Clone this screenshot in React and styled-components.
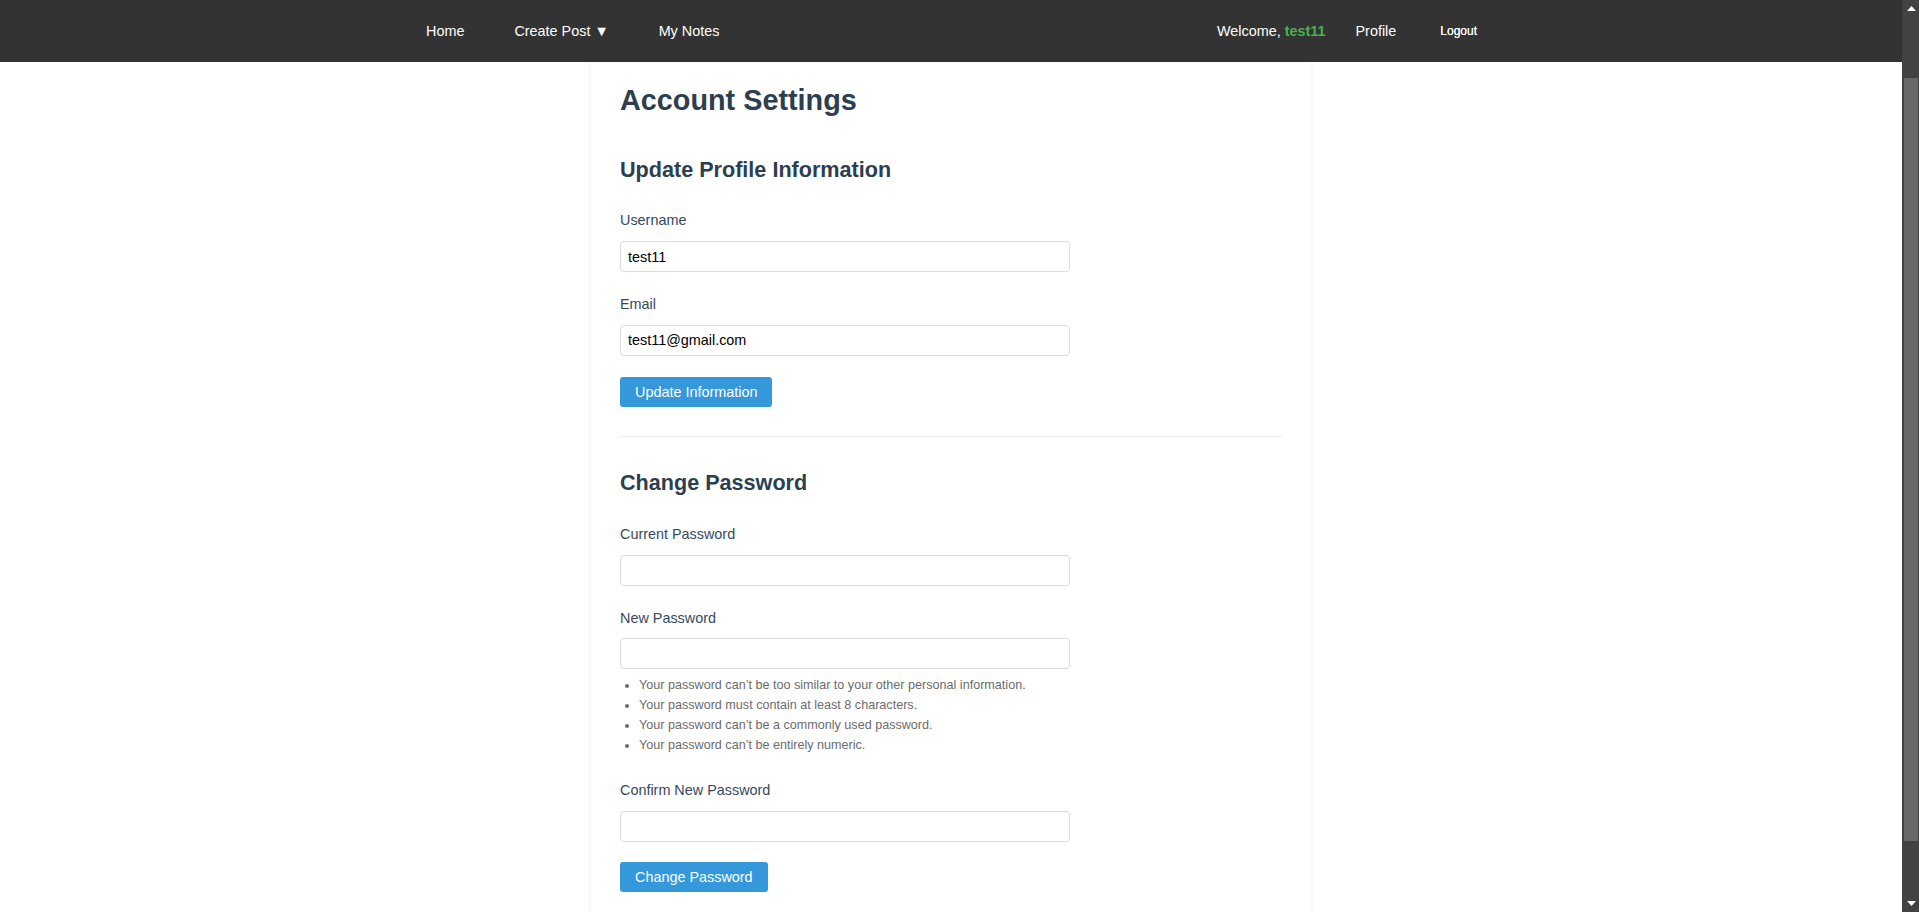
import React from 'react'
import styled, { createGlobalStyle } from 'styled-components';

const GlobalStyle = createGlobalStyle`
  html {
    scrollbar-width: none;
  }
  body {
    margin: 0 17px 0 0;
    background: #fff;
    font-family: "Liberation Sans", Arial, sans-serif;
    font-size: 14.4px;
  }
`;

function App() {
  return (
    <>
      <GlobalStyle />
      <Nav>
        <NavInner>
          <NavGroup $gap={20}>
            <NavLink href="#">Home</NavLink>
            <NavLink href="#">Create Post ▼</NavLink>
            <NavLink href="#">My Notes</NavLink>
          </NavGroup>
          <NavGroup $gap={15}>
            <Welcome>Welcome, <UserName>test11</UserName></Welcome>
            <NavLink href="#">Profile</NavLink>
            <LogoutButton>Logout</LogoutButton>
          </NavGroup>
        </NavInner>
      </Nav>
      <Main>
        <Title>Account Settings</Title>

        <SectionTitle>Update Profile Information</SectionTitle>
        <Form>
          <Field>
            <Label>Username</Label>
            <Input type="text" defaultValue="test11" />
          </Field>
          <Field>
            <Label>Email</Label>
            <Input type="email" defaultValue="test11@gmail.com" />
          </Field>
          <SubmitButton type="button">Update Information</SubmitButton>
        </Form>

        <Divider />

        <SectionTitle $second>Change Password</SectionTitle>
        <Form>
          <Field>
            <Label>Current Password</Label>
            <Input type="password" />
          </Field>
          <Field>
            <Label>New Password</Label>
            <Input type="password" />
            <HelpList>
              <li>Your password can’t be too similar to your other personal information.</li>
              <li>Your password must contain at least 8 characters.</li>
              <li>Your password can’t be a commonly used password.</li>
              <li>Your password can’t be entirely numeric.</li>
            </HelpList>
          </Field>
          <Field>
            <Label>Confirm New Password</Label>
            <Input type="password" />
          </Field>
          <SubmitButton type="button" $last>Change Password</SubmitButton>
        </Form>
      </Main>

      <ScrollRail>
        <ArrowButton>
          <svg width="9" height="5" viewBox="0 0 9 5"><path d="M0 5 L4.5 0 L9 5 Z" fill="#fff" /></svg>
        </ArrowButton>
        <Track>
          <Thumb />
        </Track>
        <ArrowButton>
          <svg width="9" height="5" viewBox="0 0 9 5"><path d="M0 0 L4.5 5 L9 0 Z" fill="#fff" /></svg>
        </ArrowButton>
      </ScrollRail>
    </>
  );
}
export default App;

const Nav = styled.nav`
  height: 62px;
  background-color: #333;
  display: flex;
  align-items: center;
  padding-bottom: 1px;
  box-sizing: border-box;
`;
const NavInner = styled.div`
  width: 1080px;
  margin: 0 auto;
  display: flex;
  justify-content: space-between;
  align-items: center;
`;
const NavGroup = styled.div`
  display: flex;
  align-items: center;
  gap: ${p => p.$gap}px;
`;
const NavLink = styled.a`
  padding: 0 15px;
  color: #fff;
  text-decoration: none;
  font-size: 14.4px;
`;
const Welcome = styled.span`
  color: #fff;
  font-size: 14.4px;
`;
const UserName = styled.strong`
  color: #4caf50;
`;
const LogoutButton = styled.button`
  background: none;
  border: none;
  padding: 0 14px;
  color: #fff;
  font-family: "Liberation Sans", Arial, sans-serif;
  font-size: 12px;
  font-weight: normal;
  text-shadow: 0 0 0.4px #fff;
  cursor: pointer;
`;
const Main = styled.main`
  width: 720px;
  margin: 0 auto;
  padding: 21px 29px 152px;
  box-sizing: border-box;
  background: #fff;
  box-shadow: 0 0 6px rgba(0, 0, 0, 0.07);
`;
const Title = styled.h1`
  margin: 0;
  font-size: 28.8px;
  line-height: 1.2;
  color: #2c3e50;
`;
const SectionTitle = styled.h2`
  margin: ${p => (p.$second ? '0' : '39.4px')} 0 29.5px;
  font-size: 21.6px;
  line-height: 1.2;
  color: #2c3e50;
`;
const Form = styled.form`
  display: flex;
  flex-direction: column;
  align-items: flex-start;
`;
const Field = styled.div`
  & + & {
    margin-top: 24px;
  }
`;
const Label = styled.label`
  display: block;
  margin-bottom: 11.5px;
  font-size: 14.4px;
  line-height: 1.2;
  color: #34495e;
`;
const Input = styled.input`
  display: block;
  width: 450px;
  height: 31px;
  box-sizing: border-box;
  padding: 0 7px;
  border: 1px solid #ddd;
  border-radius: 4px;
  font-family: "Liberation Sans", Arial, sans-serif;
  font-size: 14.4px;
  color: #000;
  outline: none;
`;
const HelpList = styled.ul`
  margin: 6px 0 3px;
  padding-left: 19px;
  font-size: 12.6px;
  line-height: 20px;
  color: #6b6b6b;
`;
const SubmitButton = styled.button`
  margin-top: ${p => (p.$last ? '20px' : '21.5px')};
  height: 30px;
  padding: 0 15px;
  border: none;
  border-radius: 3px;
  background-color: #3498db;
  color: #fff;
  font-family: "Liberation Sans", Arial, sans-serif;
  font-size: 14.4px;
  cursor: pointer;
`;
const Divider = styled.hr`
  margin: 28.5px 0 33.5px;
  border: none;
  border-top: 1px solid #eee;
`;
const ScrollRail = styled.div`
  position: fixed;
  top: 0;
  right: 0;
  bottom: 0;
  width: 17px;
  background: #424242;
  display: flex;
  flex-direction: column;
`;
const ArrowButton = styled.div`
  height: 17px;
  display: flex;
  align-items: center;
  justify-content: center;
  padding-left: 1px;
`;
const Track = styled.div`
  flex: 1;
  padding: 61px 1px 0 2px;
`;
const Thumb = styled.div`
  height: 763px;
  background: #686868;
`;
